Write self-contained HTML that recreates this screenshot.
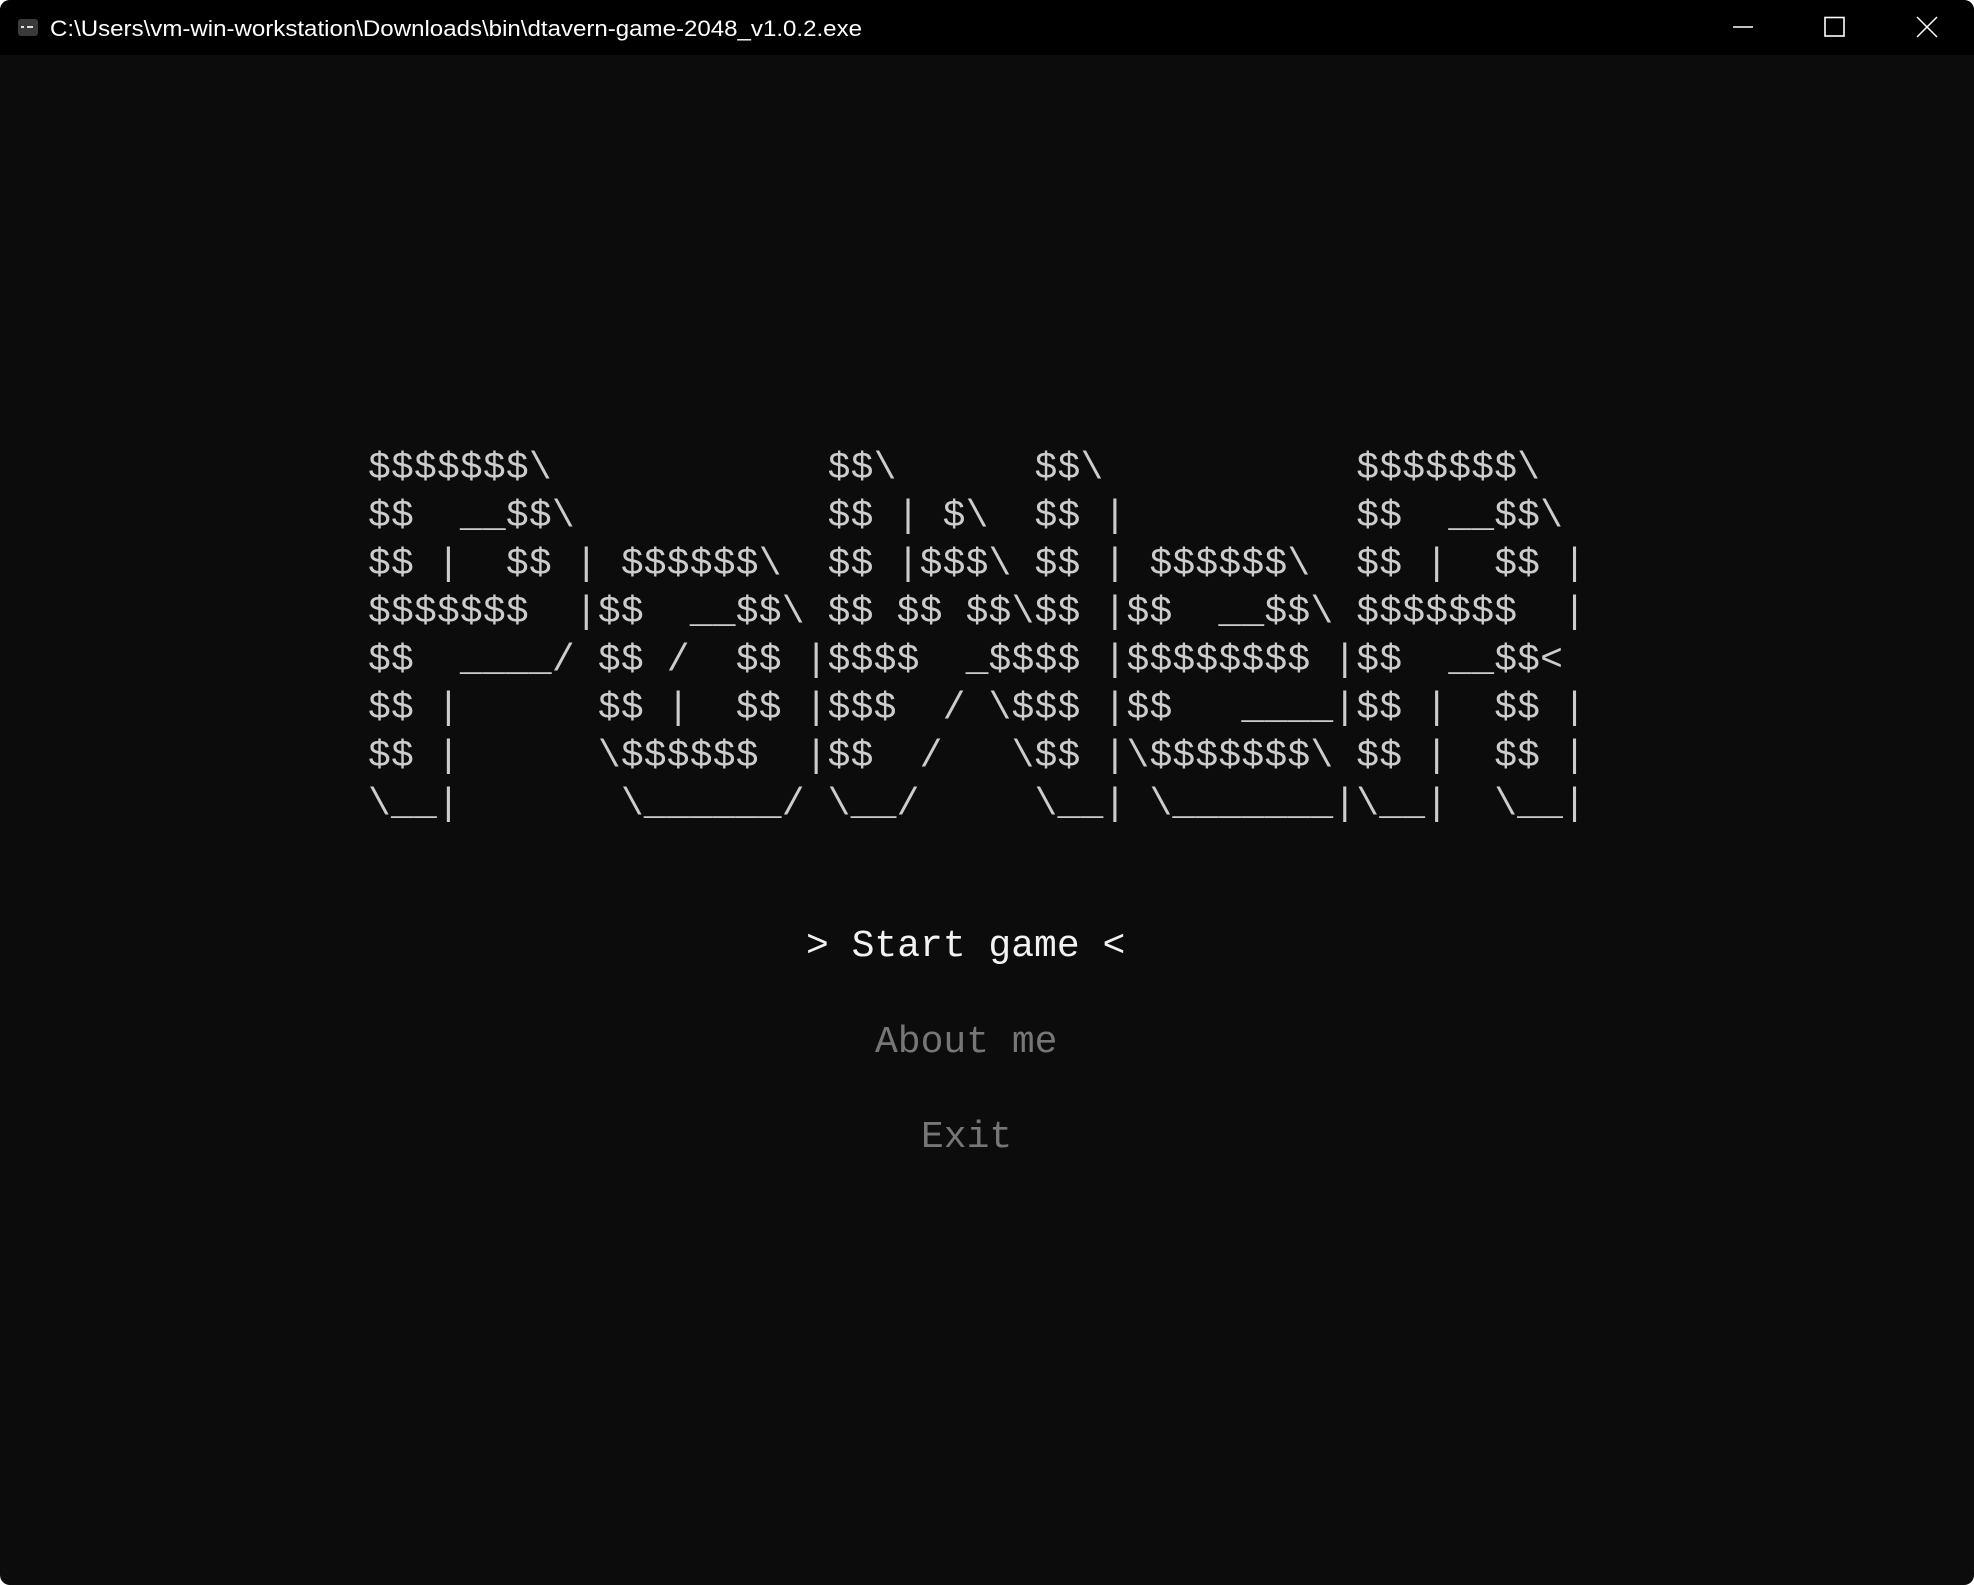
<!DOCTYPE html>
<html><head><meta charset="utf-8"><style>
html,body{margin:0;padding:0;background:#fff;width:1974px;height:1585px;overflow:hidden}
#win{position:absolute;left:0;top:0;width:1974px;height:1585px;background:#0c0c0c;border-radius:10px;overflow:hidden}
#bar{position:absolute;left:0;top:0;width:1974px;height:55px;background:#000}
pre,.m{font-family:"Liberation Mono","DejaVu Sans Mono",monospace;font-size:38px;line-height:48px;margin:0;position:absolute;white-space:pre}
pre{left:368px;top:445px;color:#cccccc;letter-spacing:0.18px}
.m{color:#767676}
</style></head><body><div id="win">
<div id="bar">
<svg width="1974" height="55" style="position:absolute;left:0;top:0">
<rect x="18" y="19" width="20" height="17" rx="3" fill="#3a3a3a"/>
<rect x="21" y="26" width="3" height="2" fill="#ddd"/><rect x="27" y="26" width="6" height="2" fill="#ddd"/>
<text x="50" y="36" font-family="Liberation Sans, sans-serif" font-size="22" fill="#ffffff" textLength="812" lengthAdjust="spacingAndGlyphs">C:\Users\vm-win-workstation\Downloads\bin\dtavern-game-2048_v1.0.2.exe</text>
<line x1="1733" y1="27" x2="1753" y2="27" stroke="#fff" stroke-width="1.5"/>
<rect x="1825" y="17.5" width="19" height="18.5" fill="none" stroke="#fff" stroke-width="1.6"/>
<path d="M1917 17 L1937 37 M1937 17 L1917 37" stroke="#fff" stroke-width="1.5"/>
</svg>
</div>
<pre>$$$$$$$\            $$\      $$\           $$$$$$$\
$$  __$$\           $$ | $\  $$ |          $$  __$$\
$$ |  $$ | $$$$$$\  $$ |$$$\ $$ | $$$$$$\  $$ |  $$ |
$$$$$$$  |$$  __$$\ $$ $$ $$\$$ |$$  __$$\ $$$$$$$  |
$$  ____/ $$ /  $$ |$$$$  _$$$$ |$$$$$$$$ |$$  __$$&lt;
$$ |      $$ |  $$ |$$$  / \$$$ |$$   ____|$$ |  $$ |
$$ |      \$$$$$$  |$$  /   \$$ |\$$$$$$$\ $$ |  $$ |
\__|       \______/ \__/     \__| \_______|\__|  \__|</pre>
<div class="m" style="left:806px;top:923px;color:#f2f2f2">&gt; Start game &lt;</div>
<div class="m" style="left:875px;top:1019px">About me</div>
<div class="m" style="left:921px;top:1114px">Exit</div>
</div></body></html>
